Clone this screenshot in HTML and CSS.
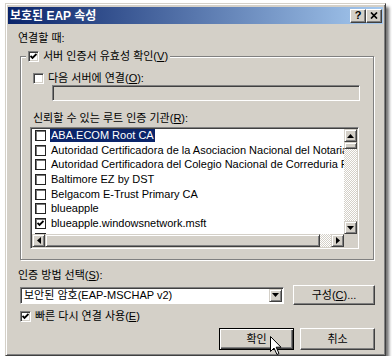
FILE: index.html
```html
<!DOCTYPE html>
<html lang="ko">
<head>
    <meta charset="UTF-8">
    <meta name="viewport" content="width=device-width, initial-scale=1.0">
    <title>보호된 EAP 속성</title>
    <link rel="stylesheet" href="styles.css">
</head>
<body>
    <div class="window">
        <div class="titlebar">
            <span class="title">보호된 EAP 속성</span>
            <div class="tb-buttons">
                <span class="tb-btn">?</span>
                <span class="tb-btn">
                    <svg width="8" height="7" viewBox="0 0 8 7"><path d="M1 0.5 L7 6.5 M7 0.5 L1 6.5" stroke="#000" stroke-width="1.7"/></svg>
                </span>
            </div>
        </div>

        <div class="content">
            <div class="label">연결할 때:</div>

            <fieldset class="group">
                <legend>
                    <span class="check-row">
                        <span class="chk"><svg width="7" height="7" viewBox="0 0 7 7"><polyline points="0.5,3 2.5,5 6.5,1" fill="none" stroke="#000" stroke-width="1.8"/></svg></span>
                        <span>서버 인증서 유효성 확인(<u>V</u>)</span>
                    </span>
                </legend>

                <div class="check-row server-row">
                    <span class="chk"></span>
                    <span>다음 서버에 연결(<u>O</u>):</span>
                </div>
                <div class="textbox"></div>

                <div class="label ca-label">신뢰할 수 있는 루트 인증 기관(<u>R</u>):</div>
                <div class="listbox">
                    <div class="list-rows">
                        <div class="list-row"><span class="chk flat"></span><span class="item selected">ABA.ECOM Root CA</span></div>
                        <div class="list-row"><span class="chk flat"></span><span class="item">Autoridad Certificadora de la Asociacion Nacional del Notariado Mexicano</span></div>
                        <div class="list-row"><span class="chk flat"></span><span class="item">Autoridad Certificadora del Colegio Nacional de Correduria Publica Mexicana</span></div>
                        <div class="list-row"><span class="chk flat"></span><span class="item">Baltimore EZ by DST</span></div>
                        <div class="list-row"><span class="chk flat"></span><span class="item">Belgacom E-Trust Primary CA</span></div>
                        <div class="list-row"><span class="chk flat"></span><span class="item">blueapple</span></div>
                        <div class="list-row"><span class="chk flat"><svg width="7" height="7" viewBox="0 0 7 7"><polyline points="0.5,3 2.5,5 6.5,1" fill="none" stroke="#000" stroke-width="1.8"/></svg></span><span class="item">blueapple.windowsnetwork.msft</span></div>
                        <div class="list-row"><span class="chk flat"></span><span class="item">C&amp;W HKT SecureNet CA Class A</span></div>
                    </div>
                    <div class="vscroll">
                        <span class="sbtn"><svg width="7" height="4" viewBox="0 0 7 4"><path d="M3.5 0 L7 4 H0 Z"/></svg></span>
                        <span class="thumb"></span>
                        <span class="track"></span>
                        <span class="sbtn"><svg width="7" height="4" viewBox="0 0 7 4"><path d="M0 0 H7 L3.5 4 Z"/></svg></span>
                    </div>
                    <div class="hscroll">
                        <span class="sbtn"><svg width="4" height="7" viewBox="0 0 4 7"><path d="M0 3.5 L4 0 V7 Z"/></svg></span>
                        <span class="thumb hthumb"></span>
                        <span class="track"></span>
                        <span class="sbtn"><svg width="4" height="7" viewBox="0 0 4 7"><path d="M0 0 L4 3.5 L0 7 Z"/></svg></span>
                    </div>
                    <div class="corner"></div>
                </div>
            </fieldset>

            <div class="label method-label">인증 방법 선택(<u>S</u>):</div>
            <div class="method-row">
                <div class="combo">
                    <span class="combo-text">보안된 암호(EAP-MSCHAP v2)</span>
                    <span class="sbtn"><svg width="7" height="4" viewBox="0 0 7 4"><path d="M0 0 H7 L3.5 4 Z"/></svg></span>
                </div>
                <button class="btn config">구성(<u>C</u>)...</button>
            </div>

            <div class="check-row fast-row">
                <span class="chk"><svg width="7" height="7" viewBox="0 0 7 7"><polyline points="0.5,3 2.5,5 6.5,1" fill="none" stroke="#000" stroke-width="1.8"/></svg></span>
                <span>빠른 다시 연결 사용(<u>E</u>)</span>
            </div>

            <div class="actions">
                <button class="btn default">확인
                    <svg class="cursor" width="12" height="19" viewBox="0 0 12 19"><path d="M0.5 0.5 V15.5 L4 12 L7 18.5 L9 17.5 L6.2 11.2 H11 Z" fill="#fff" stroke="#000" stroke-width="1"/></svg>
                </button>
                <button class="btn">취소</button>
            </div>
        </div>
    </div>
</body>
</html>
```

FILE: styles.css
```css
*{
    margin: 0;
    padding: 0;
    box-sizing: border-box;
}

body{
    background-color: #fff;
    font-family: "Liberation Sans", "Noto Sans CJK KR", sans-serif;
    font-size: 11px;
    line-height: 14px;
    color: #000;
}

.window{
    width: 381px;
    height: 353px;
    margin: 3px 0 0 5px;
    padding: 3px 2px 2px;
    background-color: #d4d0c8;
    border: 1px solid;
    border-color: #d4d0c8 #404040 #404040 #d4d0c8;
    box-shadow: inset 1px 1px #fff, inset -1px -1px #808080, 3px 4px 3px rgba(0, 0, 0, 0.55);
}

/* title bar */
.titlebar{
    height: 17px;
    display: flex;
    align-items: center;
    justify-content: space-between;
    padding: 0 1px 0 2px;
    background: linear-gradient(to right, #0a246a, #a6caf0);
}

.title{
    color: #fff;
    font-weight: bold;
    font-size: 12px;
}

.tb-buttons{
    display: flex;
}

.tb-btn{
    width: 16px;
    height: 14px;
    display: flex;
    align-items: center;
    justify-content: center;
    background-color: #d4d0c8;
    border: 1px solid;
    border-color: #fff #404040 #404040 #fff;
    box-shadow: inset -1px -1px #808080;
    font-weight: bold;
    font-size: 11px;
    line-height: 1;
}

.content{
    padding: 7px 8px 0 10px;
}

/* checkboxes */
.check-row{
    display: flex;
    align-items: center;
    gap: 4px;
    height: 14px;
    white-space: nowrap;
}

.chk{
    width: 11px;
    height: 11px;
    flex: none;
    display: flex;
    align-items: center;
    justify-content: center;
    background-color: #fff;
    border: 1px solid;
    border-color: #808080 #fff #fff #808080;
    box-shadow: inset 1px 1px #404040, inset -1px -1px #d4d0c8;
}

.chk.flat{
    border-color: #222;
    box-shadow: inset 1px 1px #777;
}

/* group box */
.group{
    width: 354px;
    min-width: 0;
    margin: 4px 0 0 2px;
    padding: 0 0 10px 0;
    border: 1px solid #808080;
    box-shadow: 1px 1px 0 #fff, inset 1px 1px 0 #fff;
}

.group legend{
    margin-left: 5px;
    padding: 0 2px;
    background-color: #d4d0c8;
}

.server-row{
    margin: 8px 0 0 12px;
}

.textbox{
    width: 308px;
    height: 16px;
    margin-left: 31px;
    background-color: #d4d0c8;
    border: 1px solid;
    border-color: #808080 #fff #fff #808080;
    box-shadow: inset 1px 1px #404040;
}

.ca-label{
    margin: 10px 0 0 12px;
}

/* list box */
.listbox{
    width: 329px;
    height: 122px;
    margin: 2px 0 0 9px;
    padding: 1px;
    display: grid;
    grid-template-columns: 1fr 13px;
    grid-template-rows: 1fr 13px;
    background-color: #fff;
    border: 1px solid;
    border-color: #808080 #fff #fff #808080;
    box-shadow: inset 1px 1px #404040, inset -1px -1px #d4d0c8;
}

.list-rows{
    overflow: hidden;
    padding-top: 0;
}

.list-row{
    display: flex;
    align-items: center;
    gap: 4px;
    height: 14.7px;
    padding-left: 3px;
    white-space: nowrap;
}

.list-row:first-child{
    margin-top: -1px;
}

.item{
    padding: 0 1px;
    line-height: 13px;
}

.selected{
    background-color: #0a246a;
    color: #fff;
}

.vscroll{
    display: flex;
    flex-direction: column;
}

.hscroll{
    display: flex;
}

.sbtn{
    width: 13px;
    height: 13px;
    flex: none;
    display: flex;
    align-items: center;
    justify-content: center;
    background-color: #d4d0c8;
    border: 1px solid;
    border-color: #d4d0c8 #404040 #404040 #d4d0c8;
    box-shadow: inset 1px 1px #fff, inset -1px -1px #808080;
}

.thumb{
    height: 7px;
    flex: none;
    background-color: #d4d0c8;
    border: 1px solid;
    border-color: #d4d0c8 #404040 #404040 #d4d0c8;
    box-shadow: inset 1px 1px #fff, inset -1px -1px #808080;
}

.hthumb{
    width: 275px;
    height: 13px;
}

.track{
    flex: 1;
    background: repeating-conic-gradient(#fff 0 25%, #d4d0c8 0 50%) 0 0 / 2px 2px;
}

.corner{
    background-color: #d4d0c8;
}

/* bottom part */
.method-label{
    margin-top: 8px;
}

.method-row{
    display: flex;
    align-items: center;
    height: 20px;
    margin: 3px 0 0 2px;
}

.combo{
    width: 264px;
    height: 17px;
    display: flex;
    align-items: center;
    justify-content: space-between;
    padding: 1px;
    background-color: #fff;
    border: 1px solid;
    border-color: #808080 #fff #fff #808080;
    box-shadow: inset 1px 1px #404040;
}

.combo-text{
    padding-left: 2px;
    white-space: nowrap;
}

.btn{
    width: 75px;
    height: 22px;
    font: inherit;
    color: #000;
    background-color: #d4d0c8;
    border: 1px solid;
    border-color: #fff #404040 #404040 #fff;
    box-shadow: inset -1px -1px #808080;
}

.config{
    width: 82px;
    height: 20px;
    margin-left: 9px;
}

.default{
    position: relative;
    border-color: #000;
    box-shadow: inset 1px 1px #fff, inset -1px -1px #404040, inset -2px -2px #808080;
}

.cursor{
    position: absolute;
    left: 50px;
    top: 7px;
}

.fast-row{
    margin: 4px 0 0 2px;
}

.actions{
    display: flex;
    justify-content: flex-end;
    gap: 6px;
    margin-top: 5px;
}
```
